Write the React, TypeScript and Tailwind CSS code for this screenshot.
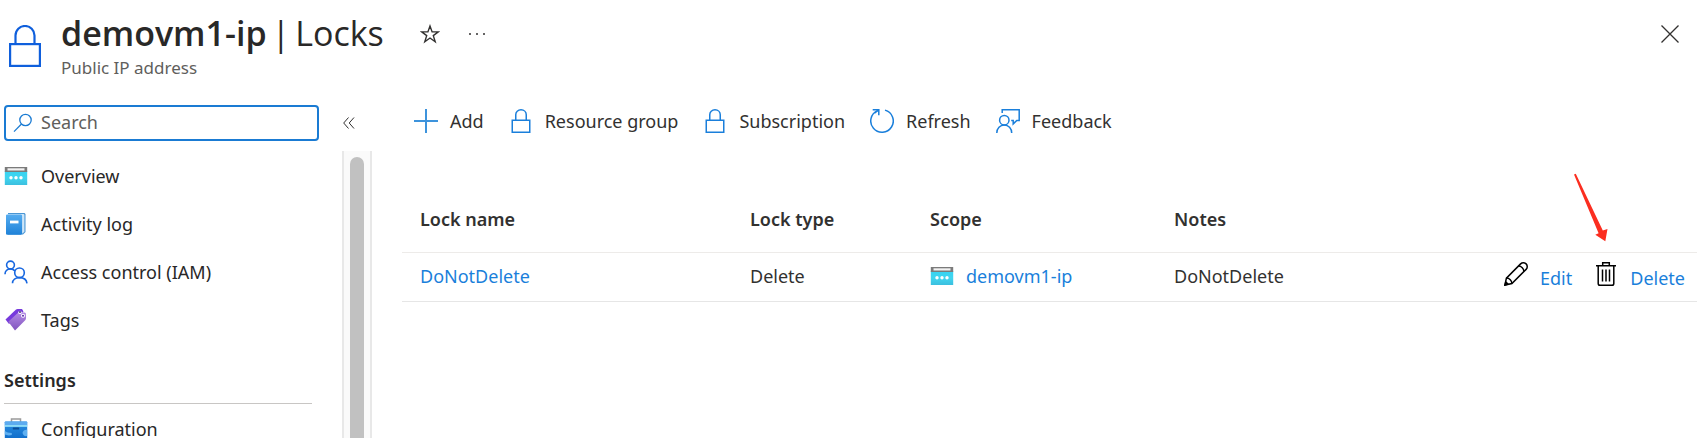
import React from "react";

function LockIcon() {
  return (
    <svg viewBox="0 0 24 24" className="h-6 w-6" fill="none" stroke="currentColor" strokeWidth="1.500" aria-hidden="true">
      <rect x="3.25" y="11.25" width="17.5" height="12" />
      <path d="M6.75 11V5.8C6.75 2.9 9 .8 12 .8s5.25 2.1 5.25 5V11" />
    </svg>
  );
}

function HeaderLockIcon() {
  return (
    <svg viewBox="0 0 32 42" className="h-[42px] w-8 shrink-0 text-[#0f5fdc]" fill="none" stroke="currentColor" strokeWidth="2.200" aria-hidden="true">
      <rect x="1.100" y="19.100" width="29.800" height="21.800" />
      <path d="M6.500 19v-8.500a9.500 9.500 0 0 1 19 0V19" />
    </svg>
  );
}

function StarIcon() {
  return (
    <svg viewBox="0 0 20 20" className="h-5 w-5" fill="none" stroke="currentColor" strokeWidth="1.4" aria-hidden="true">
      <path d="M10 2l2.100 5.900h6.200l-5 3.700 1.900 6.200L10 14l-5.200 3.800 1.900-6.200-5-3.700h6.200z" />
    </svg>
  );
}

function MoreIcon() {
  return (
    <svg viewBox="0 0 18 4" className="h-1 w-[18px]" fill="currentColor" aria-hidden="true">
      <circle cx="2" cy="2" r="1" />
      <circle cx="9" cy="2" r="1" />
      <circle cx="16" cy="2" r="1" />
    </svg>
  );
}

function CloseIcon() {
  return (
    <svg viewBox="0 0 18 18" className="h-[18px] w-[18px]" fill="none" stroke="currentColor" strokeWidth="1.300" aria-hidden="true">
      <path d="M.5.5l17 17M17.500.5l-17 17" />
    </svg>
  );
}

function SearchIcon() {
  return (
    <svg viewBox="0 0 20 20" className="h-5 w-5 shrink-0 text-[#1a7bd3]" fill="none" stroke="currentColor" strokeWidth="1.300" aria-hidden="true">
      <circle cx="12.500" cy="7" r="5.700" />
      <path d="M8.500 11L1 18.600" />
    </svg>
  );
}

function CollapseIcon() {
  return (
    <svg viewBox="0 0 12 12" className="h-3 w-3" fill="none" stroke="currentColor" strokeWidth="1" aria-hidden="true">
      <path d="M5.500.5L.7 6l4.800 5.500M11 .5L6.200 6l4.800 5.500" />
    </svg>
  );
}

function PublicIpIcon() {
  return (
    <svg viewBox="0 0 24 24" className="h-6 w-6 shrink-0" aria-hidden="true">
      <defs>
        <linearGradient id="ip-body" x1="0" y1="0" x2="0" y2="1">
          <stop offset="0" stopColor="#36d3f2" />
          <stop offset=".5" stopColor="#41d5ef" />
          <stop offset="1" stopColor="#3bbfdf" />
        </linearGradient>
      </defs>
      <rect x=".8" y="7" width="22.400" height="14" fill="url(#ip-body)" />
      <rect x=".8" y="3" width="22.400" height="5" fill="#7b7b7b" />
      <rect x="3.500" y="4.300" width="17" height="2.200" fill="#f2f2f2" />
      <circle cx="7" cy="13.800" r="1.700" fill="#fff" />
      <circle cx="12" cy="13.800" r="1.700" fill="#fff" />
      <circle cx="17" cy="13.800" r="1.700" fill="#fff" />
    </svg>
  );
}

function LogIcon() {
  return (
    <svg viewBox="0 0 24 24" className="h-6 w-6 shrink-0" aria-hidden="true">
      <defs>
        <linearGradient id="log-cover" x1="0" y1="0" x2="0" y2="1">
          <stop offset="0" stopColor="#55acf0" />
          <stop offset="1" stopColor="#1f82d8" />
        </linearGradient>
      </defs>
      <path d="M4 1h16c.8 0 1.500.7 1.500 1.500V20L19 22.500H4z" fill="#4a96d4" />
      <path d="M4 2h15.500c.5 0 .9.4.9.900v16.800l-2 1.800H4z" fill="#cfe6f8" />
      <path d="M2 3.800C2 2.800 2.700 2.600 3.500 2.600h13.200c.8 0 1.400.6 1.400 1.400v17.600c0 .7-.6 1.200-1.400 1.200H3.500c-.9 0-1.500-.5-1.500-1.300z" fill="url(#log-cover)" />
      <rect x="6" y="8.600" width="8.500" height="2.800" fill="#fff" />
    </svg>
  );
}

function PeopleIcon() {
  return (
    <svg viewBox="0 0 24 24" className="h-6 w-6 shrink-0 text-[#1767e0]" fill="none" stroke="currentColor" strokeWidth="1.600" aria-hidden="true">
      <circle cx="6.500" cy="5" r="3.900" />
      <path d="M1 14.200c0-3 2.400-5.300 5.500-5.300 1.800 0 3.400.8 4.400 2.100" />
      <circle cx="15.500" cy="12.800" r="4.800" />
      <path d="M8.500 23.300c0-3.500 3.100-5.700 7-5.700s7 2.200 7.500 5.700" />
    </svg>
  );
}

function TagIcon() {
  return (
    <svg viewBox="0 0 24 24" className="h-6 w-6 shrink-0" aria-hidden="true">
      <defs>
        <linearGradient id="tag-front" x1="0" y1="0" x2="0" y2="1">
          <stop offset="0" stopColor="#b58be6" />
          <stop offset="1" stopColor="#8054bd" />
        </linearGradient>
      </defs>
      <path d="M1.500 11.500L12 1.600c.5-.4 1-.6 1.600-.6H18l1.500 2.500L5 16z" fill="#773adc" />
      <path d="M4.300 13.700L14 4.800c.6-.5 1.200-.7 1.900-.7l4.700.4c.8.1 1.300.6 1.300 1.400l.1 4.300c0 .8-.3 1.500-.8 2L11 22.600z" fill="url(#tag-front)" />
      <circle cx="19" cy="7.800" r="2" fill="#fff" />
      <circle cx="19" cy="7.800" r="1" fill="#5b2ba8" />
      <circle cx="16" cy="4.400" r="1.700" fill="#fff" />
      <circle cx="16" cy="4" r=".9" fill="#32176b" />
    </svg>
  );
}

function ToolboxIcon() {
  return (
    <svg viewBox="0 0 24 24" className="h-6 w-6 shrink-0" aria-hidden="true">
      <defs>
        <linearGradient id="box-body" x1="0" y1="0" x2="0" y2="1">
          <stop offset="0" stopColor="#2a8fe2" />
          <stop offset="1" stopColor="#0f6cc9" />
        </linearGradient>
      </defs>
      <path d="M7.500 5V2h9v3" fill="none" stroke="#9b9b9b" strokeWidth="1.500" />
      <rect x=".8" y="4.500" width="22.400" height="18" rx=".8" fill="url(#box-body)" />
      <rect x=".8" y="4.500" width="22.400" height="4.500" rx=".8" fill="#5cabf0" />
      <rect x=".8" y="8.200" width="22.400" height="1.600" fill="#9be7fb" />
      <rect x="8.800" y="10.500" width="6.400" height="2" rx=".5" fill="#0b4e97" />
      <path d="M.8 14l3 1.500 4 .5v2l-3 .5-4-1zM23.200 12.500c-3 .3-5 2-4.500 4s2.500 3 4.500 2.500z" fill="#5fb0f1" />
    </svg>
  );
}

function AddIcon() {
  return (
    <svg viewBox="0 0 24 24" className="h-6 w-6" fill="none" stroke="#3d93dc" strokeWidth="2" aria-hidden="true">
      <path d="M12 0v24M0 12h24" />
    </svg>
  );
}

function RefreshIcon() {
  return (
    <svg viewBox="0 0 24 24" className="h-6 w-6" fill="none" stroke="currentColor" strokeWidth="1.500" aria-hidden="true">
      <path d="M15 1.100A11.250 11.250 0 1 1 7.600 1.600" />
      <path d="M2.700.8h6.100v5.400" />
      <path d="M8.500 1L4.500 4.200" />
    </svg>
  );
}

function FeedbackIcon() {
  return (
    <svg viewBox="0 0 24 24" className="h-6 w-6" fill="none" stroke="currentColor" strokeWidth="1.500" aria-hidden="true">
      <circle cx="8.300" cy="11.200" r="4.700" />
      <path d="M.8 24c0-4.600 3.300-8 7.500-8s7.400 3.400 7.400 8" />
      <path d="M6.200 4V.8h17v10.600h-2.400l-3.600 3.500v-3.500h-2" />
    </svg>
  );
}

function PencilIcon() {
  return (
    <svg viewBox="0 0 24 24" className="h-6 w-6" fill="none" stroke="currentColor" strokeWidth="1.500" aria-hidden="true">
      <path d="M.9 23.100l1.500-7L16.600 1.900a3.800 3.800 0 0 1 5.500 5.500L7.900 21.600z" />
      <path d="M2.400 16.100a5.500 5.500 0 0 1 5.500 5.500M14.400 4.100a5.500 5.500 0 0 1 5.500 5.500" />
      <path d="M1 23l.8-3 2.200 2.200z" fill="currentColor" />
    </svg>
  );
}

function TrashIcon() {
  return (
    <svg viewBox="0 0 24 24" className="h-6 w-6" fill="none" stroke="currentColor" strokeWidth="1.500" aria-hidden="true">
      <path d="M2 3.800h20M8.700 3.500V.8h6.600v2.700M4.200 4v17.400c0 1 .7 1.800 1.800 1.800h12c1.100 0 1.800-.8 1.800-1.800V4" />
      <path d="M8.500 7.500v12M12 7.500v12M15.500 7.500v12" />
    </svg>
  );
}

function PointerArrow() {
  return (
    <svg viewBox="0 0 34 69" className="pointer-events-none absolute bottom-full left-0 mb-5 h-[69px] w-[34px] -translate-x-5" fill="#fb2e20" aria-hidden="true">
      <path d="M0 1.600L1.800.800 28.800 57.600l4.700-1.500L31.300 68.200 21.300 61.800l3.300-1.500z" />
    </svg>
  );
}

const navItems = [
  { label: "Overview", icon: <PublicIpIcon /> },
  { label: "Activity log", icon: <LogIcon /> },
  { label: "Access control (IAM)", icon: <PeopleIcon /> },
  { label: "Tags", icon: <TagIcon /> },
];

const commands = [
  { label: "Add", icon: <AddIcon /> },
  { label: "Resource group", icon: <LockIcon /> },
  { label: "Subscription", icon: <LockIcon /> },
  { label: "Refresh", icon: <RefreshIcon /> },
  { label: "Feedback", icon: <FeedbackIcon /> },
];

const locks = [{ name: "DoNotDelete", type: "Delete", scope: "demovm1-ip", notes: "DoNotDelete" }];

function NavItem({ label, icon }: { label: string; icon: React.ReactNode }) {
  return (
    <li>
      <a href="#" className="flex h-12 items-center gap-[13px] whitespace-nowrap text-[#292827]">
        {icon}
        {label}
      </a>
    </li>
  );
}

export default function App() {
  return (
    <div className="flex h-screen flex-col overflow-hidden bg-white font-['Noto_Sans','Open_Sans',sans-serif] text-[18px] leading-6 text-[#323130]">
      <header className="flex items-start pt-3 pr-[21px] pl-[9px]">
        <div className="pt-[13px]">
          <HeaderLockIcon />
        </div>
        <div className="ml-5">
          <h1 className="flex gap-[5px] font-['Open_Sans','Noto_Sans',sans-serif] text-[34px] leading-[43px] whitespace-nowrap text-[#292827]">
            <span className="font-semibold">demovm1-ip</span>
            <span>|</span>
            <span>Locks</span>
          </h1>
          <p className="pt-px text-[17px] leading-6 text-[#605e5c]">Public IP address</p>
        </div>
        <div className="ml-9 flex h-11 items-center gap-7">
          <button type="button" aria-label="Add to favorites">
            <StarIcon />
          </button>
          <button type="button" aria-label="More actions">
            <MoreIcon />
          </button>
        </div>
        <button type="button" aria-label="Close" className="ml-auto flex h-11 items-center">
          <CloseIcon />
        </button>
      </header>

      <div className="flex min-h-0 flex-1 pt-[25px]">
        <aside className="flex w-[372px] shrink-0 flex-col">
          <div className="flex items-center gap-6 pl-1">
            <label className="flex h-9 w-[315px] items-center gap-2 rounded-sm border-2 border-[#1a7bd3] px-[7px]">
              <SearchIcon />
              <input type="search" aria-label="Search" placeholder="Search" className="min-w-0 flex-1 bg-transparent pb-[2px] outline-none placeholder:text-[#605e5c]" />
            </label>
            <button type="button" aria-label="Collapse menu">
              <CollapseIcon />
            </button>
          </div>
          <div className="mt-[10px] flex min-h-0 flex-1">
            <nav aria-label="Resource menu" className="min-w-0 flex-1 overflow-hidden pr-[30px] pl-1">
              <ul className="pt-px">
                {navItems.map((item) => (
                  <NavItem key={item.label} {...item} />
                ))}
              </ul>
              <h2 className="mt-6 border-b border-[#c8c6c4] pb-[11px] font-semibold text-[#292827]">Settings</h2>
              <ul className="pt-px">
                <NavItem label="Configuration" icon={<ToolboxIcon />} />
              </ul>
            </nav>
            <div className="w-[30px] border-x-2 border-[#e8e8e8] bg-[#fafafa] px-[6px] pt-[6px]">
              <div className="h-full w-full rounded-t-full bg-[#c1c1c1]" />
            </div>
          </div>
        </aside>

        <main className="min-w-0 flex-1 pr-[3px] pl-[30px]">
          <div role="toolbar" aria-label="Lock commands" className="flex items-center gap-[25px] pt-1 pl-3">
            {commands.map((command) => (
              <button key={command.label} type="button" className="flex items-center gap-3 whitespace-nowrap">
                <span className="text-[#1a7fdb]">{command.icon}</span>
                {command.label}
              </button>
            ))}
          </div>

          <table className="mt-[53px] w-full table-fixed border-collapse text-left">
            <colgroup>
              <col className="w-[330px]" />
              <col className="w-[180px]" />
              <col className="w-[244px]" />
              <col />
              <col className="w-[240px]" />
            </colgroup>
            <thead>
              <tr className="h-[66px] border-b border-[#edebe9] [&>th]:pl-[18px] [&>th]:font-semibold">
                <th scope="col">Lock name</th>
                <th scope="col">Lock type</th>
                <th scope="col">Scope</th>
                <th scope="col">Notes</th>
                <th scope="col" aria-label="Actions" />
              </tr>
            </thead>
            <tbody>
              {locks.map((lock) => (
                <tr key={lock.name} className="h-[49px] border-b border-[#e6e6e6] [&>td]:pb-[2px] [&>td]:pl-[18px]">
                  <td>
                    <a href="#" className="text-[#1a7fdb]">{lock.name}</a>
                  </td>
                  <td>{lock.type}</td>
                  <td>
                    <a href="#" className="flex items-center gap-3 text-[#1a7fdb]">
                      <PublicIpIcon />
                      {lock.scope}
                    </a>
                  </td>
                  <td>{lock.notes}</td>
                  <td>
                    <div className="flex justify-end gap-[22px] pr-3 text-[#1a7fdb]">
                      <button type="button" className="flex items-start gap-3">
                        <span className="text-black"><PencilIcon /></span>
                        <span className="pt-1">Edit</span>
                      </button>
                      <button type="button" className="relative flex items-start gap-3">
                        <span className="text-black"><TrashIcon /></span>
                        <span className="pt-1">Delete</span>
                        <PointerArrow />
                      </button>
                    </div>
                  </td>
                </tr>
              ))}
            </tbody>
          </table>
        </main>
      </div>
    </div>
  );
}
